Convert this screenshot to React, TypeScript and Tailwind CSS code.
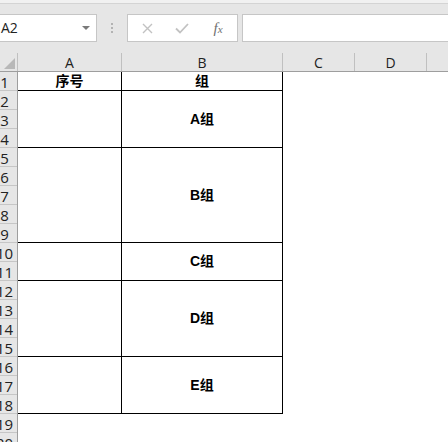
const rows = [
  { label: '序号', value: '组', span: 1 },
  { label: '', value: 'A组', span: 3 },
  { label: '', value: 'B组', span: 5 },
  { label: '', value: 'C组', span: 2 },
  { label: '', value: 'D组', span: 4 },
  { label: '', value: 'E组', span: 3 },
];

const cols = [
  { name: 'A', w: 'w-[104px]' },
  { name: 'B', w: 'w-[161px]' },
  { name: 'C', w: 'w-[72px]' },
  { name: 'D', w: 'w-[72px]' },
];

const cellFont = { fontFamily: '"Liberation Sans", "Noto Sans CJK SC", sans-serif' };

export default function App() {
  const rowNums = Array.from({ length: 20 }, (_, i) => i + 1);

  return (
    <div className="w-[448px] h-[442px] overflow-hidden bg-white" style={{ fontFamily: '"Open Sans", "Liberation Sans", sans-serif' }}>
      {/* top strip */}
      <div className="h-[4px] bg-[#f1f1f1] border-b border-[#d4d4d4]" />

      {/* formula bar */}
      <div className="h-[49px] bg-[#e6e6e6] pt-[10px] flex items-start">
        <div className="w-[97px] h-[28px] bg-white border border-l-0 border-[#c6c6c6] flex items-center justify-between pl-[1px] pr-[6px]">
          <span className="text-[14px] text-[#222] leading-none">A2</span>
          <svg width="8" height="5" viewBox="0 0 8 5">
            <path d="M0 0 L8 0 L4 4 Z" fill="#7a7a7a" />
          </svg>
        </div>
        <div className="w-[30px] h-[28px] flex flex-col items-center justify-center gap-[2px]">
          <span className="w-[2px] h-[2px] bg-[#b3b3b3]" />
          <span className="w-[2px] h-[2px] bg-[#b3b3b3]" />
          <span className="w-[2px] h-[2px] bg-[#b3b3b3]" />
        </div>
        <div className="w-[111px] h-[28px] bg-white border border-[#c6c6c6] flex items-center">
          <div className="w-[36px] flex justify-center pl-[2px]">
            <svg width="11" height="11" viewBox="0 0 11 11">
              <path d="M1 1 L10 10 M10 1 L1 10" stroke="#c2c2c2" strokeWidth="1.4" />
            </svg>
          </div>
          <div className="w-[36px] flex justify-center">
            <svg width="14" height="11" viewBox="0 0 14 11">
              <path d="M1 5.5 L5 9.5 L13 1" stroke="#c2c2c2" strokeWidth="1.8" fill="none" />
            </svg>
          </div>
          <div className="w-[36px] flex justify-center">
            <span className="italic text-[15px] text-[#707070] leading-none" style={{ fontFamily: '"Liberation Serif", serif' }}>
              f<span className="text-[11px]">x</span>
            </span>
          </div>
        </div>
        <div className="ml-[4px] flex-1 h-[28px] bg-white border border-r-0 border-[#c6c6c6]" />
      </div>

      {/* column headers */}
      <div className="h-[19px] flex bg-[#e6e6e6] border-b border-[#9e9e9e]">
        <div className="w-[18px] border-r border-[#c0c0c0] flex items-end justify-end pr-[2px] pb-[2px]">
          <svg width="11" height="11" viewBox="0 0 11 11">
            <path d="M11 0 L11 11 L0 11 Z" fill="#b8b8b8" />
          </svg>
        </div>
        {cols.map((c) => (
          <div key={c.name} className={`${c.w} border-r border-[#c0c0c0] flex items-center justify-center text-[14px] text-[#222] leading-none pt-[2px]`}>
            {c.name}
          </div>
        ))}
        <div className="flex-1" />
      </div>

      {/* sheet */}
      <div className="flex">
        <div className="w-[18px] shrink-0 bg-[#e6e6e6] border-r border-[#9e9e9e] overflow-hidden">
          {rowNums.map((n) => (
            <div key={n} className="h-[19px] border-b border-[#c6c6c6] flex">
              <div className="w-[9px] flex justify-center items-center whitespace-nowrap text-[15px] text-[#222] leading-none pt-[2px]">
                {n}
              </div>
            </div>
          ))}
        </div>

        <div className="w-[265px]" style={cellFont}>
          {rows.map((r, i) => (
            <div
              key={i}
              className="flex border-b border-black"
              style={{ height: r.span * 19 }}
            >
              <div className="w-[104px] border-r border-black flex items-center justify-center text-[14px] font-bold text-black">
                {r.label}
              </div>
              <div className="w-[161px] border-r border-black flex items-center justify-center text-[14px] font-bold text-black">
                {r.value}
              </div>
            </div>
          ))}
        </div>
      </div>
    </div>
  );
}
